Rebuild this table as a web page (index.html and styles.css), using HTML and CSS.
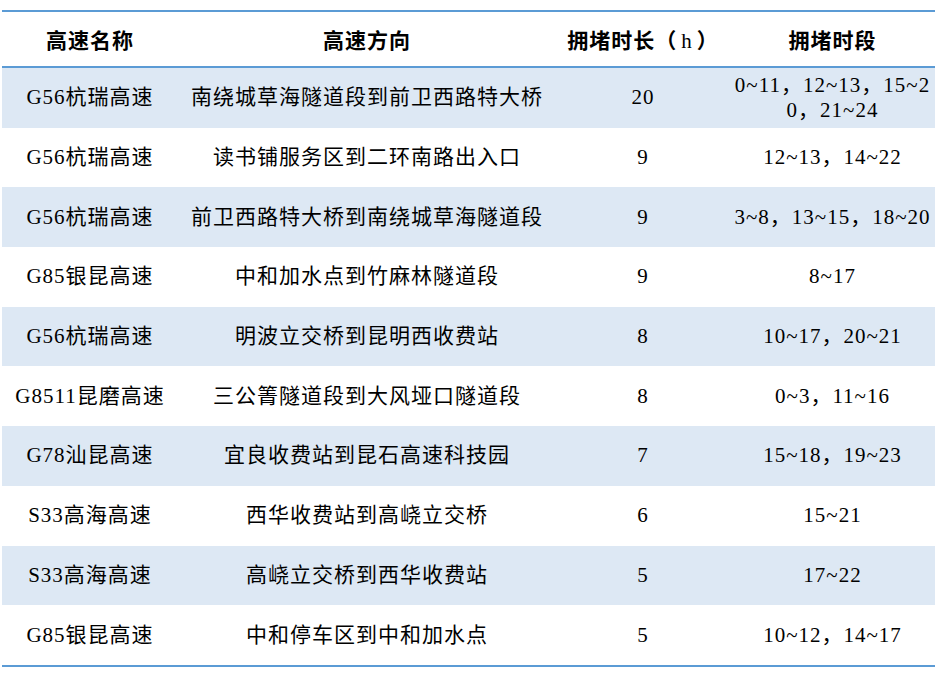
FILE: index.html
```html
<!DOCTYPE html>
<html lang="zh">
<head>
<meta charset="utf-8">
<title>拥堵路段</title>
<link rel="stylesheet" href="styles.css">
</head>
<body>
<table class="data">
  <colgroup>
    <col class="c1"><col class="c2"><col class="c3"><col class="c4">
  </colgroup>
  <thead>
    <tr><th>高速名称</th><th>高速方向</th><th>拥堵时长（<span class="unit">h</span>）</th><th>拥堵时段</th></tr>
  </thead>
  <tbody>
    <tr class="alt"><td>G56杭瑞高速</td><td>南绕城草海隧道段到前卫西路特大桥</td><td>20</td><td>0~11，12~13，15~2<br>0，21~24</td></tr>
    <tr><td>G56杭瑞高速</td><td>读书铺服务区到二环南路出入口</td><td>9</td><td>12~13，14~22</td></tr>
    <tr class="alt"><td>G56杭瑞高速</td><td>前卫西路特大桥到南绕城草海隧道段</td><td>9</td><td>3~8，13~15，18~20</td></tr>
    <tr><td>G85银昆高速</td><td>中和加水点到竹麻林隧道段</td><td>9</td><td>8~17</td></tr>
    <tr class="alt"><td>G56杭瑞高速</td><td>明波立交桥到昆明西收费站</td><td>8</td><td>10~17，20~21</td></tr>
    <tr><td>G8511昆磨高速</td><td>三公箐隧道段到大风垭口隧道段</td><td>8</td><td>0~3，11~16</td></tr>
    <tr class="alt"><td>G78汕昆高速</td><td>宜良收费站到昆石高速科技园</td><td>7</td><td>15~18，19~23</td></tr>
    <tr><td>S33高海高速</td><td>西华收费站到高峣立交桥</td><td>6</td><td>15~21</td></tr>
    <tr class="alt"><td>S33高海高速</td><td>高峣立交桥到西华收费站</td><td>5</td><td>17~22</td></tr>
    <tr><td>G85银昆高速</td><td>中和停车区到中和加水点</td><td>5</td><td>10~12，14~17</td></tr>
  </tbody>
</table>
</body>
</html>
```

FILE: styles.css
```css
html, body {
  margin: 0;
  padding: 0;
  background: #ffffff;
}

.data {
  margin: 10px 0 0 2px;
  width: 933px;
  border-collapse: collapse;
  table-layout: fixed;
  border-top: 2px solid #5b9bd5;
  border-bottom: 2px solid #5b9bd5;
  font-family: "Liberation Serif", "Noto Sans CJK SC", serif;
  font-size: 21px;
  letter-spacing: 1px;
  color: #000000;
}

.c1 { width: 176px; }
.c2 { width: 378px; }
.c3 { width: 174px; }
.c4 { width: 205px; }

.data th {
  height: 54px;
  padding: 0;
  font-family: "Noto Sans CJK SC", sans-serif;
  font-weight: bold;
  text-align: center;
  vertical-align: middle;
  border-bottom: 2px solid #5b9bd5;
}

.data th .unit {
  font-family: "Liberation Serif", serif;
  font-weight: normal;
  padding: 0 4px;
}

.data td {
  height: 59.7px;
  padding: 0;
  text-align: center;
  vertical-align: middle;
  line-height: 25px;
  white-space: nowrap;
}

.data tr.alt td {
  background: #dde8f4;
}
```
